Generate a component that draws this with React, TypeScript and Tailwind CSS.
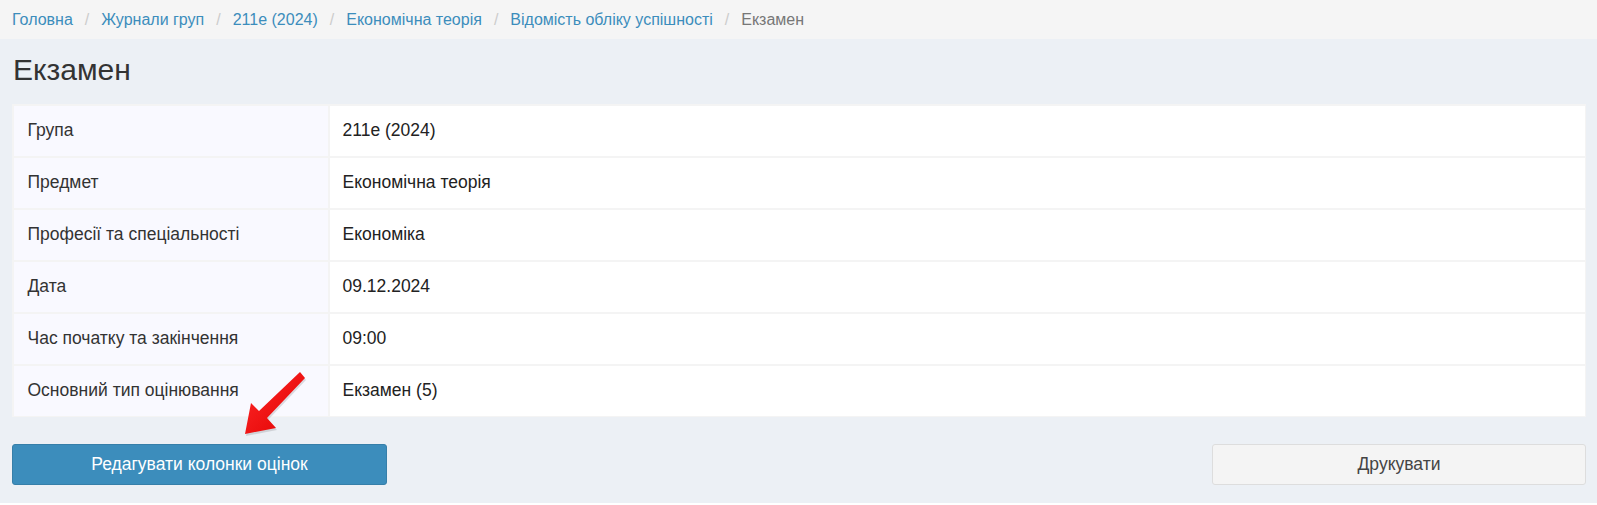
import React from "react";

const crumbs = [
  "Головна",
  "Журнали груп",
  "211е (2024)",
  "Економічна теорія",
  "Відомість обліку успішності",
];

const rows: [string, string][] = [
  ["Група", "211е (2024)"],
  ["Предмет", "Економічна теорія"],
  ["Професії та спеціальності", "Економіка"],
  ["Дата", "09.12.2024"],
  ["Час початку та закінчення", "09:00"],
  ["Основний тип оцінювання", "Екзамен (5)"],
];

const ARROW = "245,434 251,403 259,411 300,372 305,378 267,418 276,428";

const Arrow = () => (
  <svg
    className="absolute left-0 top-0 pointer-events-none"
    width="400"
    height="505"
    viewBox="0 0 400 505"
  >
    <defs>
      <linearGradient id="ar" x1="0" y1="0" x2="1" y2="1">
        <stop offset="0" stopColor="#ff2a2a" />
        <stop offset="1" stopColor="#e00000" />
      </linearGradient>
    </defs>
    <polygon points={ARROW} fill="#000" opacity="0.12" transform="translate(1,2)" />
    <polygon points={ARROW} fill="url(#ar)" />
  </svg>
);

export default function App() {
  return (
    <div
      className="relative w-[1597px] h-[505px] bg-white overflow-hidden text-[#333]"
      style={{ fontFamily: '"Liberation Sans", Arial, sans-serif' }}
    >
      <div className="h-[503px] bg-[#ecf0f5] flex flex-col">
        {/* breadcrumb */}
        <nav className="h-[39px] bg-[#f5f5f5] flex items-center pl-3 text-[16px] leading-none">
          {crumbs.map((c) => (
            <span key={c} className="flex items-center">
              <span className="text-[#3c8dbc]">{c}</span>
              <span className="text-[#ccc] px-[12px]">/</span>
            </span>
          ))}
          <span className="text-[#777]">Екзамен</span>
        </nav>

        <div className="pl-3 pr-[11px] flex flex-col">
          <h1 className="text-[30px] leading-none text-[#333] pt-[16px] pb-[19px] pl-px">
            Екзамен
          </h1>

          {/* details table */}
          <div className="bg-[#f4f4f4] p-[1.5px] grid grid-cols-[314px_1fr] gap-[2px] text-[17.5px]">
            {rows.map(([k, v]) => (
              <React.Fragment key={k}>
                <div className="h-[50px] bg-[#f9f9ff] flex items-center pl-[14px]">
                  {k}
                </div>
                <div className="h-[50px] bg-white flex items-center pl-[13px] text-[#222]">
                  {v}
                </div>
              </React.Fragment>
            ))}
          </div>

          {/* actions */}
          <div className="flex justify-between mt-[27px]">
            <button className="w-[375px] h-[41px] rounded-[3px] bg-[#3c8dbc] border border-[#367fa9] text-white text-[17.5px] pb-px">
              Редагувати колонки оцінок
            </button>
            <button className="w-[374px] h-[41px] rounded-[3px] bg-[#f4f4f4] border border-[#ddd] text-[#444] text-[17.5px] pb-px">
              Друкувати
            </button>
          </div>
        </div>
      </div>
      <Arrow />
    </div>
  );
}
